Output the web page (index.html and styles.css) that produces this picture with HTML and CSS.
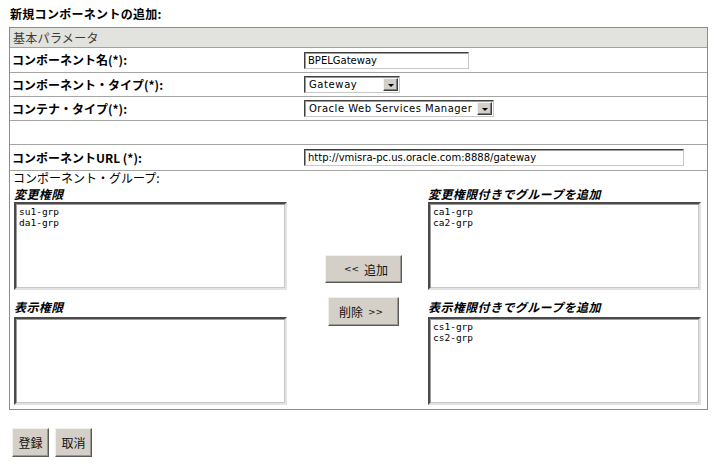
FILE: index.html
```html
<!DOCTYPE html>
<html lang="ja">
<head>
<meta charset="utf-8">
<link rel="stylesheet" href="styles.css">
</head>
<body>
<div class="page">
  <div class="title">新規コンポーネントの追加:</div>
  <div class="panel">
    <div class="head">基本パラメータ</div>
    <div class="row r24">
      <div class="label">コンポーネント名(*):</div>
      <div class="value"><div class="field w-name">BPELGateway</div></div>
    </div>
    <div class="row r23">
      <div class="label">コンポーネント・タイプ(*):</div>
      <div class="value"><div class="select w-type"><span class="sel-text">Gateway</span><span class="arrow"><i></i></span></div></div>
    </div>
    <div class="row r23">
      <div class="label">コンテナ・タイプ(*):</div>
      <div class="value"><div class="select w-cont"><span class="sel-text">Oracle Web Services Manager</span><span class="arrow"><i></i></span></div></div>
    </div>
    <div class="row r23"></div>
    <div class="row r25">
      <div class="label">コンポーネントURL (*):</div>
      <div class="value"><div class="field w-url">http://vmisra-pc.us.oracle.com:8888/gateway</div></div>
    </div>
    <div class="group">
      <div class="group-label">コンポーネント・グループ:</div>
      <div class="group-grid">
        <div class="col">
          <div class="sub sub1">変更権限</div>
          <div class="box"><div>su1-grp</div><div>da1-grp</div></div>
          <div class="sub sub2">表示権限</div>
          <div class="box"></div>
        </div>
        <div class="mid">
          <div class="btn b-add"><span class="arr">&lt;&lt;</span> 追加</div>
          <div class="btn b-del">削除 <span class="arr">&gt;&gt;</span></div>
        </div>
        <div class="col">
          <div class="sub sub1">変更権限付きでグループを追加</div>
          <div class="box"><div>ca1-grp</div><div>ca2-grp</div></div>
          <div class="sub sub2">表示権限付きでグループを追加</div>
          <div class="box"><div>cs1-grp</div><div>cs2-grp</div></div>
        </div>
      </div>
    </div>
  </div>
  <div class="actions">
    <div class="btn b-small">登録</div>
    <div class="btn b-small">取消</div>
  </div>
</div>
</body>
</html>
```
FILE: styles.css
```css
html, body {
  margin: 0;
  padding: 0;
  background: #ffffff;
}
body {
  font-family: "Noto Sans CJK JP", "DejaVu Sans", sans-serif;
  font-size: 12px;
  color: #000;
}
.page {
  padding: 6px 0 0 9px;
}
.title {
  font-weight: bold;
  font-size: 12px;
  line-height: 16px;
  height: 16px;
  margin: 0 0 5px 1px;
  letter-spacing: 0.3px;
}
.panel {
  width: 697px;
  border: 1px solid #8c8c8c;
}
.head {
  height: 19px;
  line-height: 19px;
  background: #e2e2de;
  border-bottom: 1px solid #a0a0a0;
  padding-left: 3px;
  color: #3a3a3a;
  letter-spacing: 0.3px;
}
.row {
  display: grid;
  grid-template-columns: 294px 1fr;
  align-items: center;
  border-bottom: 1px solid #a5a5a5;
}
.r24 { height: 24px; }
.r23 { height: 23px; }
.r25 { height: 25px; }
.label {
  font-weight: bold;
  padding-left: 2px;
  letter-spacing: 0;
  line-height: 16px;
}
.value {
  display: flex;
  align-items: center;
}
.field, .select {
  box-sizing: border-box;
  height: 17px;
  background: #fff;
  border: 1px solid;
  border-color: #404040 #c8c8c8 #c8c8c8 #404040;
  box-shadow: inset 1px 1px 0 #9a9a9a;
  font-family: "DejaVu Sans", Verdana, sans-serif;
  font-size: 10px;
  line-height: 15px;
  padding-left: 3px;
  white-space: nowrap;
  overflow: hidden;
}
.w-name { width: 165px; }
.w-url { width: 380px; }
.select {
  display: flex;
  align-items: center;
  justify-content: space-between;
  padding-right: 1px;
  padding-left: 4px;
  letter-spacing: 0.6px;
}
.w-type { width: 96px; }
.w-cont { width: 190px; letter-spacing: 0.5px; }
.arrow {
  box-sizing: border-box;
  width: 15px;
  height: 13px;
  background: #d4d0c8;
  border: 1px solid;
  border-color: #f4f4f4 #404040 #404040 #f4f4f4;
  box-shadow: inset -1px -1px 0 #808080;
  display: flex;
  align-items: center;
  justify-content: center;
}
.arrow i {
  display: block;
  width: 0;
  height: 0;
  border-left: 3px solid transparent;
  border-right: 3px solid transparent;
  border-top: 3px solid #000;
  margin-top: 1px;
}
.group {
  height: 238px;
  box-sizing: border-box;
  padding: 0 0 0 4px;
}
.group-label {
  height: 15px;
  line-height: 14px;
  margin-left: -1px;
}
.group-grid {
  display: grid;
  grid-template-columns: 273px 141px 273px;
}
.col {
  display: flex;
  flex-direction: column;
}
.sub {
  font-weight: bold;
  font-style: italic;
  line-height: 16px;
  height: 15px;
  letter-spacing: 0.4px;
}
.sub1 { margin-bottom: 1px; }
.sub2 { margin-top: 9px; margin-bottom: 3px; }
.box {
  box-sizing: border-box;
  height: 88px;
  background: #fff;
  border: 2px solid;
  border-color: #4a4a4a #e2e2e2 #e2e2e2 #4a4a4a;
  box-shadow: inset 1px 1px 0 #9c9c9c, inset -1px -1px 0 #c8c8c8;
  padding: 2px 3px;
  font-family: "DejaVu Sans Mono", monospace;
  font-size: 9.5px;
  line-height: 11px;
  color: #000;
}
.mid {
  display: flex;
  flex-direction: column;
  align-items: center;
  padding-top: 69px;
  padding-left: 12px;
}
.btn {
  box-sizing: border-box;
  background: #d4d0c8;
  border: 1px solid;
  border-color: #f0efec #5a5a5a #5a5a5a #f0efec;
  box-shadow: inset -1px -1px 0 #9a9890;
  display: flex;
  align-items: center;
  justify-content: center;
  font-size: 12px;
  color: #111;
}
.arr {
  font-family: "DejaVu Sans", sans-serif;
  font-size: 9px;
  margin: 0 5px;
}
.b-add {
  width: 77px;
  height: 28px;
}
.b-del {
  width: 71px;
  height: 29px;
  margin-top: 14px;
}
.actions {
  display: flex;
  gap: 6px;
  margin-top: 18px;
  padding-left: 3px;
}
.b-small {
  width: 37px;
  height: 29px;
}
```
